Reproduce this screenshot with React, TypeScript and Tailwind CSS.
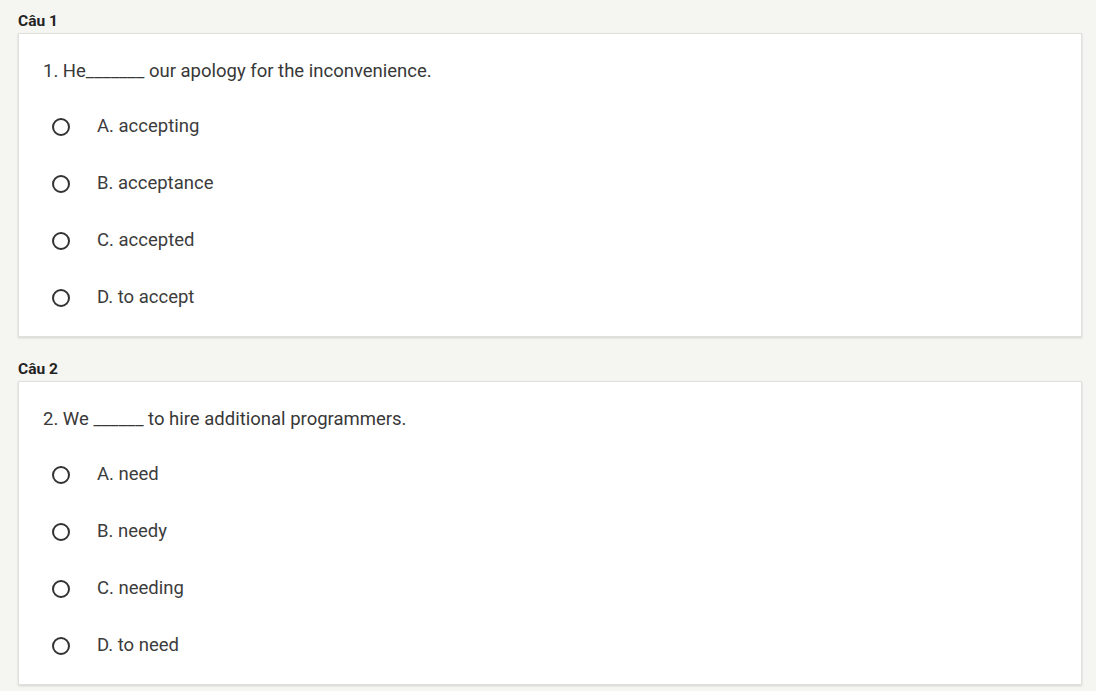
const questions = [
  {
    label: "Câu 1",
    text: "1. He_______ our apology for the inconvenience.",
    options: ["A. accepting", "B. acceptance", "C. accepted", "D. to accept"],
  },
  {
    label: "Câu 2",
    text: "2. We ______ to hire additional programmers.",
    options: ["A. need", "B. needy", "C. needing", "D. to need"],
  },
];

export default function App() {
  return (
    <div className="min-h-screen bg-[#f5f5f1] pl-[18px] pr-[14px] pt-[11px] font-['Roboto',sans-serif]">
      {questions.map((q, i) => (
        <div key={i} className={i > 0 ? "mt-[22px]" : ""}>
          <div className="text-[15.5px] leading-[20px] font-bold text-[#222] mb-[2px]">{q.label}</div>
          <div className="bg-white border border-[#e0e0dc] shadow-[0_1px_2px_rgba(0,0,0,0.15)] pt-[25px] pb-[10px] px-[24px]">
            <div className="text-[18.5px] leading-[24px] text-[#383838] mb-[15px]">{q.text}</div>
            {q.options.map((opt, j) => (
              <label key={j} className="flex items-center h-[57px] cursor-pointer">
                <span className="ml-[9px] w-[18px] h-[18px] rounded-full border-2 border-[#333]" />
                <span className="ml-[27px] text-[18.5px] text-[#3c3c3c]">{opt}</span>
              </label>
            ))}
          </div>
        </div>
      ))}
    </div>
  );
}
